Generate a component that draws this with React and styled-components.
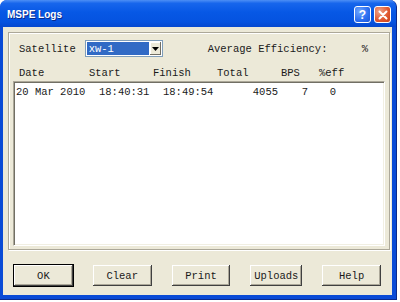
import styled, { createGlobalStyle } from "styled-components";

const GlobalStyle = createGlobalStyle`
	html, body {
		margin: 0;
		padding: 0;
		background: #ffffff;
	}
	body {
		width: 400px;
		height: 302px;
		overflow: hidden;
	}
`;

const rows = [
	{ date: "20 Mar 2010", start: "18:40:31", finish: "18:49:54", total: "4055", bps: "7", eff: "0" }
];

const headers = [
	{ label: "Date", width: 70 },
	{ label: "Start", width: 64 },
	{ label: "Finish", width: 64 },
	{ label: "Total", width: 64 },
	{ label: "BPS", width: 38 },
	{ label: "%eff", width: 40 }
];

const buttons = [
	{ label: "OK", width: 61, primary: true },
	{ label: "Clear", width: 61 },
	{ label: "Print", width: 61 },
	{ label: "Uploads", width: 54 },
	{ label: "Help", width: 61, push: true }
];

const App = () => {
	return (
		<>
			<GlobalStyle />
			<Window>
				<TitleBar>
					<Title>MSPE Logs</Title>
					<TitleButtons>
						<CaptionButton>?</CaptionButton>
						<CaptionButton close>
							<svg width="10" height="10" viewBox="0 0 10 10">
								<path d="M1.5 1.5 L8.5 8.5 M8.5 1.5 L1.5 8.5" stroke="#fff" strokeWidth="2" strokeLinecap="round" />
							</svg>
						</CaptionButton>
					</TitleButtons>
				</TitleBar>
				<Body>
					<Group>
						<TopRow>
							<Label>Satellite</Label>
							<Combo>
								<ComboValue>xw-1</ComboValue>
								<ComboArrow>
									<svg width="7" height="4" viewBox="0 0 7 4">
										<path d="M0 0 H7 L3.5 4 Z" fill="#000" />
									</svg>
								</ComboArrow>
							</Combo>
							<Label style={{ marginLeft: 45 }}>Average Efficiency:</Label>
							<Percent>%</Percent>
						</TopRow>
						<HeaderRow>
							{headers.map((h) => (
								<HeaderCell key={h.label} $width={h.width}>
									{h.label}
								</HeaderCell>
							))}
						</HeaderRow>
						<ListBox>
							{rows.map((r, i) => (
								<DataRow key={i}>
									<Cell $width={83}>{r.date}</Cell>
									<Cell $width={64}>{r.start}</Cell>
									<Cell $width={64}>{r.finish}</Cell>
									<Cell $width={51} $right>{r.total}</Cell>
									<Cell $width={30} $right>{r.bps}</Cell>
									<Cell $width={28} $right>{r.eff}</Cell>
								</DataRow>
							))}
						</ListBox>
					</Group>
					<ButtonRow>
						{buttons.map((b) => (
							<Button key={b.label} $width={b.width} $primary={b.primary} $push={b.push}>
								{b.label}
							</Button>
						))}
					</ButtonRow>
				</Body>
			</Window>
		</>
	);
};

const Window = styled.div`
	display: flex;
	flex-direction: column;
	width: 397px;
	height: 300px;
	box-sizing: border-box;
	background: #0a4bd6;
	border-radius: 7px 7px 0 0;
	padding: 0 4px 4px 3px;
	border-right: 1px solid #0a2a8c;
	border-bottom: 1px solid #0a2a8c;
	overflow: hidden;
`;

const TitleBar = styled.div`
	display: flex;
	align-items: center;
	justify-content: space-between;
	height: 27px;
	margin: 0 -4px 0 -3px;
	padding: 0 5px 0 7px;
	background: linear-gradient(#4d8ff5 0, #1766ec 12%, #0758e5 45%, #0553e0 80%, #0548cf 100%);
	flex-shrink: 0;
`;

const Title = styled.div`
	font-family: "Liberation Sans", Arial, sans-serif;
	font-weight: bold;
	font-size: 10px;
	color: #ffffff;
	text-shadow: 1px 1px #0a2a8c;
	margin-top: 2px;
`;

const TitleButtons = styled.div`
	display: flex;
	gap: 3px;
	margin-top: 2px;
`;

const CaptionButton = styled.div`
	display: flex;
	align-items: center;
	justify-content: center;
	width: 15px;
	height: 15px;
	border: 1px solid #ffffff;
	border-radius: 3px;
	background: ${(p) =>
		p.close
			? "radial-gradient(circle at 30% 30%, #f0a48a, #e0562e 60%, #c4411c)"
			: "radial-gradient(circle at 30% 30%, #6fa6ff, #2b6ef0 60%, #1c55d6)"};
	color: #ffffff;
	font-family: "Liberation Sans", Arial, sans-serif;
	font-weight: bold;
	font-size: 12px;
	line-height: 1;
`;

const Body = styled.div`
	display: flex;
	flex-direction: column;
	flex: 1;
	background: #ece9d8;
	padding: 5px 2px 0 5px;
	font-family: "Liberation Mono", "Courier New", monospace;
	font-size: 10.5px;
	color: #1a1a1a;
`;

const Group = styled.div`
	display: flex;
	flex-direction: column;
	height: 218px;
	box-sizing: border-box;
	border: 1px solid #aca899;
	box-shadow: inset 1px 1px #ffffff, 1px 1px #ffffff;
	padding: 7px 3px 3px 4px;
`;

const TopRow = styled.div`
	display: flex;
	align-items: center;
	height: 17px;
	padding-left: 6px;
`;

const Label = styled.span`
	white-space: pre;
`;

const Percent = styled.span`
	margin-left: auto;
	margin-right: 18px;
`;

const Combo = styled.div`
	display: flex;
	align-items: stretch;
	width: 78px;
	height: 17px;
	box-sizing: border-box;
	margin-left: 9px;
	background: #ffffff;
	border: 1px solid #7f9db9;
	padding: 1px;
`;

const ComboValue = styled.div`
	flex: 1;
	display: flex;
	align-items: center;
	background: #316ac5;
	color: #ffffff;
	padding-left: 2px;
	margin-right: 1px;
`;

const ComboArrow = styled.div`
	display: flex;
	align-items: center;
	justify-content: center;
	width: 11px;
	background: #ece9d8;
	box-shadow: inset -1px -1px #716f64, inset 1px 1px #ffffff;
`;

const HeaderRow = styled.div`
	display: flex;
	align-items: flex-end;
	height: 24px;
	padding-left: 6px;
	padding-bottom: 2px;
	box-sizing: border-box;
`;

const HeaderCell = styled.span`
	width: ${(p) => p.$width}px;
	flex-shrink: 0;
`;

const ListBox = styled.div`
	flex: 1;
	background: #ffffff;
	border-top: 1px solid #aca899;
	border-left: 1px solid #aca899;
	border-right: 1px solid #ffffff;
	border-bottom: 1px solid #ffffff;
	box-shadow: inset 1px 1px #716f64, inset -1px -1px #f1efe2;
	padding: 3px 0 0 2px;
	margin-right: 1px;
`;

const DataRow = styled.div`
	display: flex;
	height: 14px;
	align-items: center;
`;

const Cell = styled.span`
	width: ${(p) => p.$width}px;
	flex-shrink: 0;
	text-align: ${(p) => (p.$right ? "right" : "left")};
	white-space: pre;
`;

const ButtonRow = styled.div`
	display: flex;
	gap: 18px;
	padding: 14px 8px 0 5px;
`;

const Button = styled.div`
	display: flex;
	align-items: center;
	justify-content: center;
	width: ${(p) => p.$width}px;
	height: 23px;
	box-sizing: border-box;
	margin-left: ${(p) => (p.$push ? "auto" : "0")};
	background: #ece9d8;
	border: 1px solid ${(p) => (p.$primary ? "#000000" : "#ece9d8")};
	box-shadow: inset -1px -1px #404040, inset 1px 1px #ffffff, inset -2px -2px #aca899;
`;

export default App;
